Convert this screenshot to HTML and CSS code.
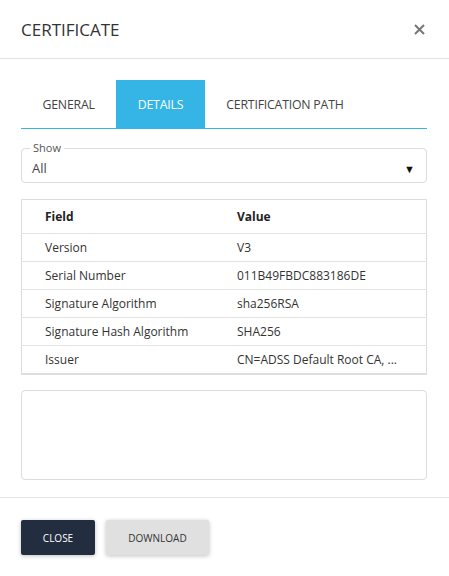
FILE: index.html
```html
<!DOCTYPE html>
<html lang="en">
<head>
    <meta charset="UTF-8">
    <meta name="viewport" content="width=device-width, initial-scale=1.0">
    <title>Certificate</title>
    <link rel="stylesheet" href="styles.css">
</head>
<body>

    <div class="dialog">
        <div class="dialog-header">
            <h2>CERTIFICATE</h2>
            <svg class="close-x" width="11" height="11" viewBox="0 0 11 11">
                <path d="M1 1 L10 10 M10 1 L1 10" stroke="#777" stroke-width="2" />
            </svg>
        </div>

        <div class="dialog-body">
            <div class="tabs">
                <a href="#" class="tab">GENERAL</a>
                <a href="#" class="tab active">DETAILS</a>
                <a href="#" class="tab">CERTIFICATION PATH</a>
            </div>

            <div class="show-select">
                <span class="show-label">Show</span>
                <span class="value">All</span>
                <span class="arrow">&#9660;</span>
            </div>

            <table class="fields">
                <thead>
                    <tr><th>Field</th><th>Value</th></tr>
                </thead>
                <tbody>
                    <tr><td>Version</td><td>V3</td></tr>
                    <tr><td>Serial Number</td><td>011B49FBDC883186DE</td></tr>
                    <tr><td>Signature Algorithm</td><td>sha256RSA</td></tr>
                    <tr><td>Signature Hash Algorithm</td><td>SHA256</td></tr>
                    <tr><td>Issuer</td><td>CN=ADSS Default Root CA, ...</td></tr>
                </tbody>
            </table>

            <div class="detail-box"></div>
        </div>

        <div class="dialog-footer">
            <button class="btn btn-dark">CLOSE</button>
            <button class="btn btn-light">DOWNLOAD</button>
        </div>
    </div>

</body>
</html>
```

FILE: styles.css
```css
body {
    font-family: "Open Sans", "Noto Sans", sans-serif;
    background-color: #fff;
    margin: 0;
    padding: 0;
    color: #333;
}

.dialog {
    width: 449px;
}

.dialog-header {
    height: 58px;
    padding: 0 24px 0 21px;
    display: flex;
    align-items: center;
    justify-content: space-between;
    border-bottom: 1px solid #e3e3e3;
}

.dialog-header h2 {
    margin: 0;
    font-size: 17px;
    font-weight: 400;
    color: #333;
}

.dialog-body {
    padding: 21px 22px 17px 21px;
}

/* tab strip */
.tabs {
    display: flex;
    height: 48px;
    border-bottom: 1px solid #35b5e5;
}

.tab {
    display: flex;
    align-items: center;
    padding: 0 21.5px;
    font-size: 12.3px;
    color: #444;
    text-decoration: none;
    letter-spacing: -0.2px;
}

.tab.active {
    background-color: #35b5e5;
    color: #fff;
}

/* show dropdown */
.show-select {
    position: relative;
    margin-top: 19px;
    height: 35px;
    padding: 5px 11px 0 10px;
    border: 1px solid #ddd;
    border-radius: 4px;
    display: flex;
    justify-content: space-between;
    align-items: center;
    box-sizing: border-box;
}

.show-label {
    position: absolute;
    top: -8px;
    left: 8px;
    padding: 0 3px;
    background-color: #fff;
    font-size: 11px;
    color: #555;
    line-height: 14px;
}

.show-select .value {
    font-size: 13px;
    color: #444;
}

.show-select .arrow {
    font-size: 11px;
    color: #111;
}

/* fields table */
.fields {
    width: 100%;
    margin-top: 16px;
    border-collapse: collapse;
    border: 1px solid #ddd;
    border-bottom: 2px solid #ddd;
    font-size: 12px;
}

.fields th,
.fields td {
    text-align: left;
    padding: 0 0 0 23px;
    height: 27px;
    border-bottom: 1px solid #e3e3e3;
    color: #333;
}

.fields th {
    height: 33px;
    font-weight: 700;
    color: #222;
}

.fields td:first-child,
.fields th:first-child {
    width: 169px;
}

.detail-box {
    margin-top: 15px;
    height: 88px;
    border: 1px solid #ddd;
    border-radius: 4px;
}

/* footer buttons */
.dialog-footer {
    border-top: 1px solid #e3e3e3;
    padding: 22px 21px;
    display: flex;
    gap: 11px;
}

.btn {
    height: 35px;
    border: none;
    border-radius: 2px;
    font-family: inherit;
    font-size: 10px;
    cursor: pointer;
    box-shadow: 0 1px 4px rgba(0, 0, 0, 0.25);
}

.btn-dark {
    background-color: #222d3f;
    color: #fff;
    width: 74px;
}

.btn-light {
    background-color: #e0e0e0;
    color: #333;
    width: 103px;
}
```
